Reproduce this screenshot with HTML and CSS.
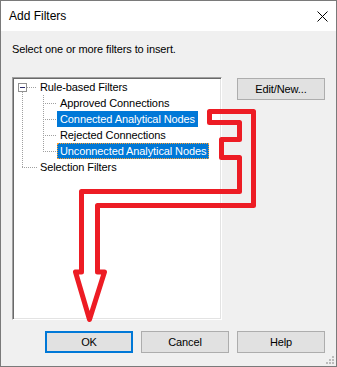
FILE: index.html
```html
<!DOCTYPE html>
<html>
<head>
  <title>Add Filters</title>
  <meta charset="UTF-8">
  <link rel="stylesheet" href="styles.css">
</head>
<body>
  <div class="dialog">
    <div class="titlebar">
      <span class="title">Add Filters</span>
      <svg class="close" width="11" height="11" viewBox="0 0 11 11">
        <path d="M0.5 0.5 L10.5 10.5 M10.5 0.5 L0.5 10.5" stroke="#000" stroke-width="1" fill="none"/>
      </svg>
    </div>
    <div class="content">
      <p class="prompt">Select one or more filters to insert.</p>
      <div class="main">
        <div class="tree">
          <div class="tree-list">
            <div class="row root">
              <span class="expander"></span>
              <span class="dash root-dash"></span>
              <span class="label">Rule-based Filters</span>
            </div>
            <div class="children">
              <div class="row child"><span class="dash child-dash"></span><span class="label">Approved Connections</span></div>
              <div class="row child"><span class="dash child-dash"></span><span class="label selected">Connected Analytical Nodes</span></div>
              <div class="row child"><span class="dash child-dash"></span><span class="label">Rejected Connections</span></div>
              <div class="row child"><span class="dash child-dash"></span><span class="label selected focused">Unconnected Analytical Nodes</span></div>
            </div>
            <div class="row leaf">
              <span class="dash leaf-dash"></span>
              <span class="label">Selection Filters</span>
            </div>
          </div>
        </div>
        <div class="side">
          <button class="btn">Edit/New...</button>
        </div>
      </div>
      <div class="actions">
        <button class="btn default">OK</button>
        <button class="btn">Cancel</button>
        <button class="btn">Help</button>
      </div>
    </div>
    <svg class="grip" width="10" height="10" viewBox="0 0 10 10">
      <rect x="7" y="1" width="2" height="2" fill="#bcbcbc"/>
      <rect x="4" y="4" width="2" height="2" fill="#bcbcbc"/>
      <rect x="7" y="4" width="2" height="2" fill="#bcbcbc"/>
      <rect x="1" y="7" width="2" height="2" fill="#bcbcbc"/>
      <rect x="4" y="7" width="2" height="2" fill="#bcbcbc"/>
      <rect x="7" y="7" width="2" height="2" fill="#bcbcbc"/>
    </svg>
    <!-- red annotation drawn over the dialog -->
    <svg class="annotation" width="337" height="367" viewBox="0 0 337 367">
      <path d="M209.5 111.5 H253.5 V205.5 H97.5 V272 H104.5 L89.5 319.5 L75.5 272 H81.5 V191.5 H239.5 V157.5 H221.5 V139.5 H239.5 V122.5 H209.5 Z"
            fill="none" stroke="#ed1c24" stroke-width="5" stroke-linejoin="round"/>
    </svg>
  </div>
</body>
</html>
```

FILE: styles.css
```css
:root {
  --face: #f0f0f0;
  --btn-face: #e1e1e1;
  --btn-border: #adadad;
  --accent: #0078d7;
  --tree-line: #a0a0a0;
}
body {
  margin: 0;
  font-family: "Segoe UI", "Liberation Sans", Arial, sans-serif;
  font-size: 11px;
  letter-spacing: -0.1px;
  color: #000;
}
.dialog {
  position: relative;
  width: 337px;
  height: 367px;
  box-sizing: border-box;
  border: 1px solid #7a7a7a;
  background-color: var(--face);
}
.titlebar {
  height: 30px;
  background-color: #fff;
  display: flex;
  align-items: center;
  justify-content: space-between;
  padding: 0 8px 0 8px;
}
.title {
  font-size: 12px;
  letter-spacing: 0;
}
.close {
  display: block;
}
.content {
  padding: 0 11px;
}
.prompt {
  margin: 10px 0 0 0;
  line-height: 16px;
}
.main {
  display: flex;
  margin-top: 20px;
}
.tree {
  width: 210px;
  height: 243px;
  box-sizing: border-box;
  padding: 1px;
  background-color: #fff;
  border: 1px solid;
  border-color: #a0a0a0 #fff #fff #a0a0a0;
  box-shadow: inset 1px 1px #696969, inset -1px -1px #e3e3e3;
}
.tree-list {
  background-image: repeating-linear-gradient(to bottom, var(--tree-line) 0 1px, transparent 1px 2px);
  background-repeat: no-repeat;
  background-size: 1px 75px;
  background-position: 8px 13px;
}
.row {
  height: 16px;
  display: flex;
  align-items: center;
}
.root {
  padding-left: 4px;
}
.expander {
  width: 9px;
  height: 9px;
  box-sizing: border-box;
  border: 1px solid #919191;
  background: #fff linear-gradient(#2b2b6b, #2b2b6b) no-repeat center / 5px 1px;
  flex: none;
}
.dash {
  height: 1px;
  flex: none;
  background-image: repeating-linear-gradient(to right, var(--tree-line) 0 1px, transparent 1px 2px);
}
.root-dash {
  width: 10px;
  margin-top: 1px;
}
.children {
  background-image: repeating-linear-gradient(to bottom, var(--tree-line) 0 1px, transparent 1px 2px);
  background-repeat: no-repeat;
  background-size: 1px 57px;
  background-position: 29px 0;
}
.child {
  padding-left: 29px;
}
.child-dash {
  width: 14px;
  margin-top: 1px;
}
.leaf {
  padding-left: 8px;
}
.leaf-dash {
  width: 15px;
  margin-top: 1px;
}
.label {
  height: 16px;
  line-height: 14px;
  box-sizing: border-box;
  padding: 0 2px;
  border: 1px solid transparent;
  white-space: nowrap;
}
.label.selected {
  background-color: var(--accent);
  color: #fff;
}
.label.focused {
  border: 1px dotted #ff9e2c;
}
.side {
  margin-left: 15px;
  padding-top: 1px;
}
.btn {
  width: 88px;
  height: 22px;
  box-sizing: border-box;
  padding: 0;
  border: 1px solid var(--btn-border);
  background-color: var(--btn-face);
  font-family: inherit;
  font-size: 11px;
  letter-spacing: inherit;
  color: #000;
}
.btn.default {
  border: 2px solid var(--accent);
}
.actions {
  display: flex;
  justify-content: flex-end;
  gap: 8px;
  margin-top: 11px;
}
.grip {
  position: absolute;
  right: 1px;
  bottom: 1px;
}
.annotation {
  position: absolute;
  left: -1px;
  top: -1px;
  pointer-events: none;
}
```
